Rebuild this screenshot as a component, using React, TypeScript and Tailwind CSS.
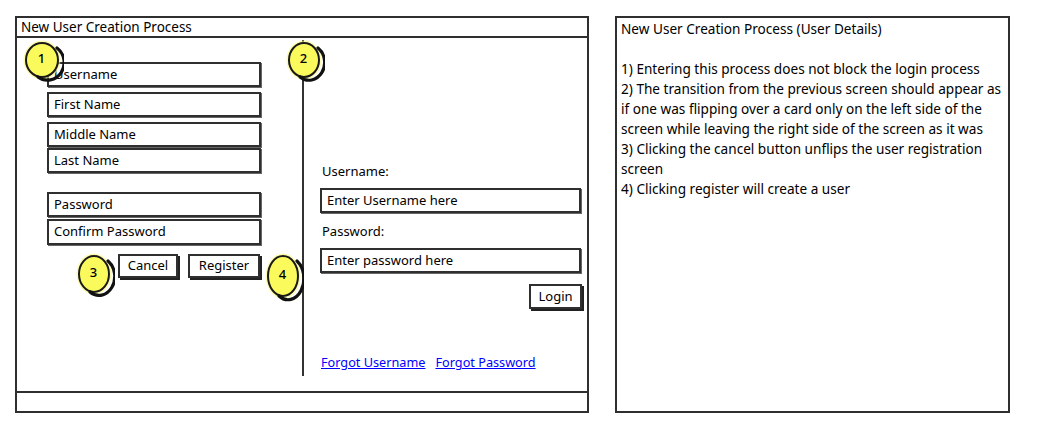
import React from "react";

const FONT = "font-['Noto_Sans',sans-serif]";

function Circle({ cx, cy, rx, ry, n }: { cx: number; cy: number; rx: number; ry: number; n: string }) {
  const w = rx * 2 + 10;
  const h = ry * 2 + 10;
  return (
    <div
      className="absolute pointer-events-none"
      style={{ left: cx - rx - 5, top: cy - ry - 5, width: w, height: h }}
    >
      <svg width={w} height={h} className="absolute inset-0">
        <ellipse cx={w / 2} cy={h / 2} rx={rx + 1.5} ry={ry + 1.5} fill="#fbf97a" opacity="0.6" />
        <ellipse cx={w / 2} cy={h / 2} rx={rx - 1} ry={ry - 1} fill="#fbfa5c" stroke="#1a1a1a" strokeWidth="2" />
        <path
          d={`M ${w / 2 + rx - 2} ${h / 2 - ry + 6} A ${rx - 1} ${ry - 1} 0 0 1 ${w / 2 - 4} ${h / 2 + ry - 1}`}
          fill="none"
          stroke="#111"
          strokeWidth="3.2"
          strokeLinecap="round"
        />
      </svg>
      <span
        className="absolute inset-0 flex items-center justify-center text-[13px] font-medium text-black leading-none"
        style={{ paddingBottom: 4, paddingRight: 1 }}
      >
        {n}
      </span>
    </div>
  );
}

function Field({ label, cls = "" }: { label: string; cls?: string }) {
  return (
    <div
      className={`w-[214px] h-[25px] border-2 border-[#2f2f2f] shadow-[1px_1px_0_#666] flex items-center pl-[5px] text-[13px] text-black ${cls}`}
    >
      {label}
    </div>
  );
}

export default function App() {
  return (
    <div className={`w-[1041px] h-[445px] bg-white flex items-start pt-[16px] pl-[15px] ${FONT} text-black`}>
      {/* Left window */}
      <div className="relative w-[574px] h-[397px] border-2 border-[#2f2f2f] flex flex-col">
        <div className="h-[20px] border-b-2 border-[#2f2f2f] flex items-center pl-[4px] pt-[2px] text-[13.5px] leading-none">
          New User Creation Process
        </div>
        <div className="flex-1 flex">
          {/* registration form */}
          <div className="w-[285px] pl-[30px] pt-[24px] flex flex-col items-start">
            <Field label="Username" />
            <Field label="First Name" cls="mt-[5px]" />
            <Field label="Middle Name" cls="mt-[5px]" />
            <Field label="Last Name" cls="mt-[1px]" />
            <Field label="Password" cls="mt-[19px]" />
            <Field label="Confirm Password" cls="mt-[2px] h-[26px]" />
            <div className="mt-[9px] ml-[71px] flex gap-[10px]">
              <div className="w-[60px] h-[24px] border-2 border-[#2f2f2f] shadow-[2px_2px_0_#222] flex items-center justify-center text-[13px]">
                Cancel
              </div>
              <div className="w-[72px] h-[24px] border-2 border-[#2f2f2f] shadow-[2px_2px_0_#222] flex items-center justify-center text-[13px]">
                Register
              </div>
            </div>
          </div>
          {/* divider */}
          <div className="w-[2px] mt-[2px] h-[336px] bg-[#333]" />
          {/* login */}
          <div className="pl-[16px] pt-[124px] flex flex-col items-start">
            <div className="h-[20px] flex items-center pl-[2px] text-[13px]">Username:</div>
            <div className="mt-[6px] w-[261px] h-[25px] border-2 border-[#2f2f2f] shadow-[1px_1px_0_#666] flex items-center pl-[5px] text-[13px]">
              Enter Username here
            </div>
            <div className="mt-[9px] h-[20px] flex items-center pl-[2px] text-[13px]">Password:</div>
            <div className="mt-[6px] w-[261px] h-[25px] border-2 border-[#2f2f2f] shadow-[1px_1px_0_#666] flex items-center pl-[5px] text-[13px]">
              Enter password here
            </div>
            <div className="mt-[11px] ml-[209px] w-[53px] h-[25px] border-2 border-[#2f2f2f] shadow-[2px_2px_0_#222] flex items-center justify-center text-[13px]">
              Login
            </div>
            <div className="mt-[44px] h-[20px] flex items-center gap-[10px] pl-[1px] text-[12.7px] text-[#0000ff]">
              <span className="underline">Forgot Username</span>
              <span className="underline">Forgot Password</span>
            </div>
          </div>
        </div>
        <div className="h-[20px] border-t-2 border-[#2f2f2f]" />

        <Circle cx={25} cy={42} rx={17} ry={18} n="1" />
        <Circle cx={287} cy={42} rx={16} ry={18} n="2" />
        <Circle cx={77} cy={256} rx={16} ry={19} n="3" />
        <Circle cx={266} cy={258} rx={16} ry={21} n="4" />
      </div>

      {/* Right notes panel */}
      <div className="ml-[26px] w-[395px] h-[397px] border-2 border-[#2f2f2f] px-[4px] pt-[1px] text-[13.6px] leading-[20px] whitespace-nowrap">
        <div>New User Creation Process (User Details)</div>
        <div className="h-[20px]" />
        <div>1) Entering this process does not block the login process</div>
        <div>2) The transition from the previous screen should appear as</div>
        <div>if one was flipping over a card only on the left side of the</div>
        <div>screen while leaving the right side of the screen as it was</div>
        <div>3) Clicking the cancel button unflips the user registration</div>
        <div>screen</div>
        <div>4) Clicking register will create a user</div>
      </div>
    </div>
  );
}
